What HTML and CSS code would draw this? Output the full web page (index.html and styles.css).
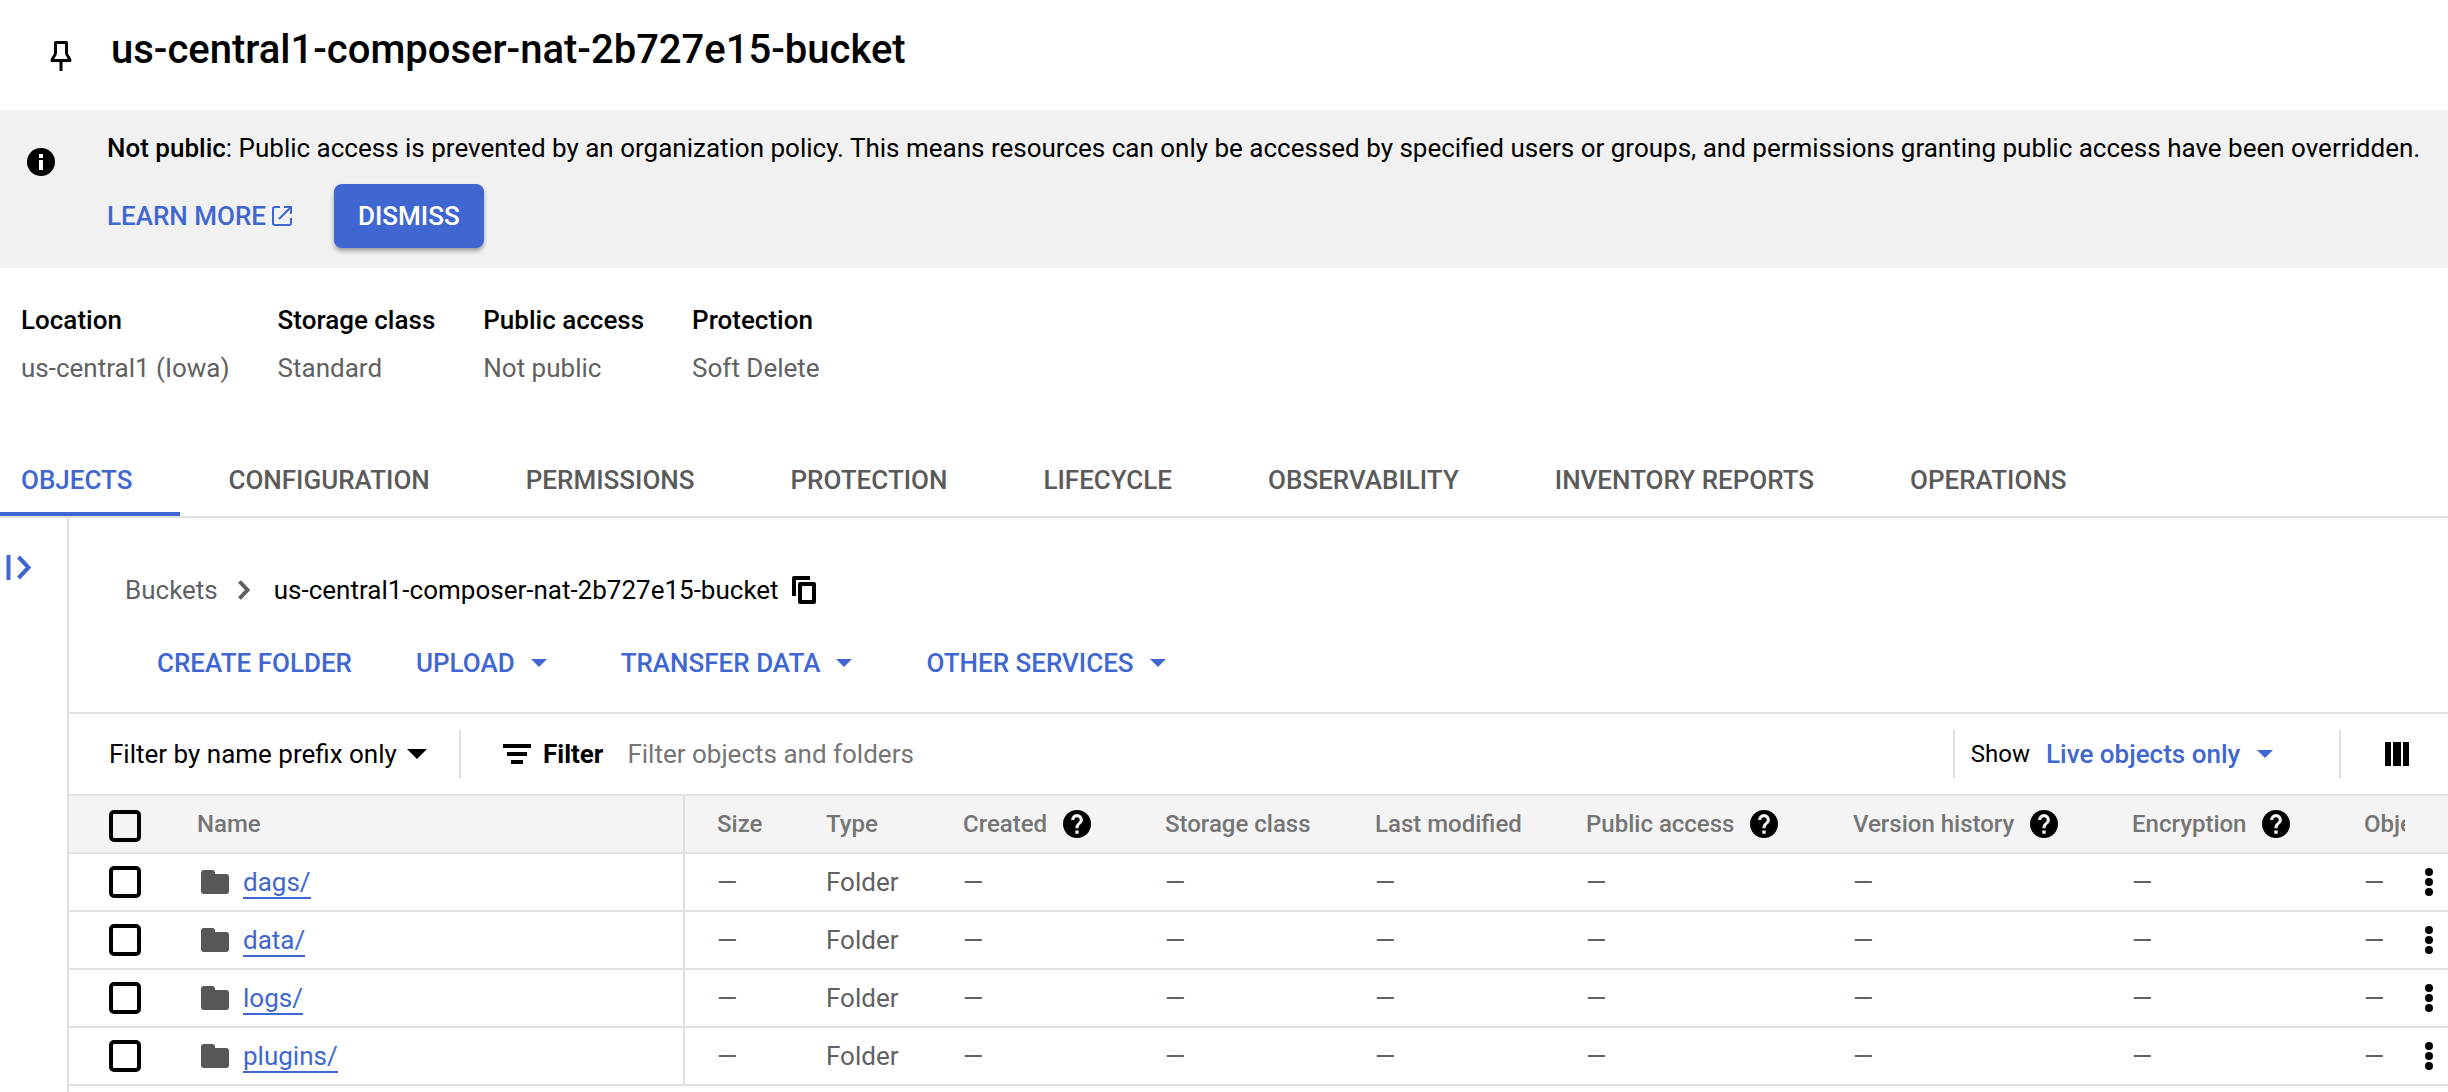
FILE: index.html
```html
<!DOCTYPE html>
<html lang="en">
<head>
<meta charset="utf-8">
<title>Bucket details</title>
<link rel="stylesheet" href="styles.css">
</head>
<body>
<svg class="sprite" aria-hidden="true">
  <symbol id="help" viewBox="2 2 20 20"><path d="M12 2a10 10 0 1 0 0 20 10 10 0 0 0 0-20zm1.2 17h-2.4v-2.4h2.4zm2-7.6-.9.9c-.8.8-1.2 1.400-1.200 2.800h-2.200v-.500c0-1.100.400-2.100 1.200-2.900l1.200-1.200c.4-.4.6-.9.6-1.400a1.900 1.900 0 0 0-3.800 0H7.800a4.200 4.200 0 0 1 8.400 0c0 .900-.400 1.700-1 2.300z"/></symbol>
  <symbol id="folder" viewBox="0 0 28 24"><path d="M3 0h8q3 0 3 3v1h11q3 0 3 3v14q0 3-3 3H3q-3 0-3-3V3q0-3 3-3z"/></symbol>
  <symbol id="more" viewBox="0 0 8 28"><circle cx="4" cy="4" r="4"/><circle cx="4" cy="14" r="4"/><circle cx="4" cy="24" r="4"/></symbol>
  <symbol id="caret" viewBox="0 0 16 8"><path d="M0 0h16l-8 8z"/></symbol>
</svg>

<header class="page-head">
  <button class="icon-button pin" aria-label="Pin page">
    <svg width="22" height="30" viewBox="0 0 22 30" fill="none" stroke="#000" stroke-width="3" stroke-linejoin="round"><path d="M5.500 1.500h11v10.500c0 3 3 4 3.500 7.500H2c.5-3.500 3.500-4.500 3.500-7.500z"/><path d="M11 20v10"/></svg>
  </button>
  <h1 class="title">us-central1-composer-nat-2b727e15-bucket</h1>
</header>

<section class="banner">
  <svg class="banner-icon" width="28" height="28" viewBox="0 0 28 28"><circle cx="14" cy="14" r="14"/><path fill="#fff" d="M12 6h4v4h-4zM12 12h4v10h-4z"/></svg>
  <div class="banner-body">
    <p class="banner-text"><strong>Not public</strong>: Public access is prevented by an organization policy. This means resources can only be accessed by specified users or groups, and permissions granting public access have been overridden.</p>
    <div class="banner-actions">
      <a class="learn" href="#">LEARN MORE<svg width="20" height="20" viewBox="0 0 20 20" fill="none" stroke="currentColor" stroke-width="2"><path d="M8 1H3Q1 1 1 3v14q0 2 2 2h14q2 0 2-2v-5M12 1h7v7M19 1 7 13"/></svg></a>
      <button class="dismiss">DISMISS</button>
    </div>
  </div>
</section>

<dl class="summary">
  <div class="fact"><dt>Location</dt><dd>us-central1 (Iowa)</dd></div>
  <div class="fact"><dt>Storage class</dt><dd>Standard</dd></div>
  <div class="fact"><dt>Public access</dt><dd>Not public</dd></div>
  <div class="fact"><dt>Protection</dt><dd>Soft Delete</dd></div>
</dl>

<nav class="tabs">
  <a class="tab active" href="#">OBJECTS</a>
  <a class="tab" href="#">CONFIGURATION</a>
  <a class="tab" href="#">PERMISSIONS</a>
  <a class="tab" href="#">PROTECTION</a>
  <a class="tab" href="#">LIFECYCLE</a>
  <a class="tab" href="#">OBSERVABILITY</a>
  <a class="tab" href="#">INVENTORY REPORTS</a>
  <a class="tab" href="#">OPERATIONS</a>
</nav>

<div class="workspace">
  <aside class="rail">
    <button class="icon-button" aria-label="Show folder browser">
      <svg width="26" height="26" viewBox="0 0 26 26" fill="none" stroke="#4067d1" stroke-width="4"><path d="M2.500 0v25M12.500 2l10 10.500-10 10.500"/></svg>
    </button>
  </aside>
  <main class="content">
    <div class="content-head">
      <div class="crumbs">
        <a class="crumb-root" href="#">Buckets</a>
        <svg width="12" height="20" viewBox="0 0 12 20" fill="none" stroke="#5f5f5f" stroke-width="4"><path d="m1.500 1.500 8 8.500-8 8.500"/></svg>
        <span class="crumb-here">us-central1-composer-nat-2b727e15-bucket</span>
        <button class="icon-button" aria-label="Copy bucket name">
          <svg width="24" height="28" viewBox="0 0 24 28" fill="none" stroke="#000" stroke-width="4" stroke-linejoin="round"><path d="M18 2H2v18"/><path d="M8 8h14v18H8z"/></svg>
        </button>
      </div>
      <div class="actions">
        <button class="action">CREATE FOLDER</button>
        <button class="action menu">UPLOAD<svg width="16" height="8"><use href="#caret"/></svg></button>
        <button class="action menu">TRANSFER DATA<svg width="16" height="8"><use href="#caret"/></svg></button>
        <button class="action menu">OTHER SERVICES<svg width="16" height="8"><use href="#caret"/></svg></button>
      </div>
    </div>

    <div class="toolbar">
      <div class="picker">
        <select aria-label="Filter mode"><option>Filter by name prefix only</option></select>
        <svg width="20" height="10" viewBox="0 0 20 10"><path d="M0 0h20L10 10z"/></svg>
      </div>
      <div class="filter">
        <svg width="28" height="20" viewBox="0 0 28 20"><path d="M0 0h28v4H0zM4 8h20v4H4zM8 16h12v4H8z"/></svg>
        <label for="filter">Filter</label>
        <input id="filter" type="text" placeholder="Filter objects and folders">
      </div>
      <div class="show">
        <label for="show">Show</label>
        <div class="picker live">
          <select id="show"><option>Live objects only</option></select>
          <svg width="16" height="8"><use href="#caret"/></svg>
        </div>
      </div>
      <div class="columns">
        <button class="icon-button" aria-label="Column options">
          <svg width="24" height="24" viewBox="0 0 24 24"><path d="M0 0h6v24H0zM8 0h8v24H8zM18 0h6v24h-6z"/></svg>
        </button>
      </div>
    </div>

    <table class="objects">
      <colgroup>
        <col class="c-check"><col class="c-name"><col class="c-size"><col class="c-type"><col class="c-created"><col class="c-storage"><col class="c-modified"><col class="c-public"><col class="c-version"><col class="c-encryption"><col class="c-retention"><col class="c-more">
      </colgroup>
      <thead>
        <tr>
          <th class="check"><input type="checkbox" aria-label="Select all"></th>
          <th class="name">Name</th>
          <th>Size</th>
          <th>Type</th>
          <th><span class="hinted">Created<svg width="28" height="28"><use href="#help"/></svg></span></th>
          <th>Storage class</th>
          <th>Last modified</th>
          <th><span class="hinted">Public access<svg width="28" height="28"><use href="#help"/></svg></span></th>
          <th><span class="hinted">Version history<svg width="28" height="28"><use href="#help"/></svg></span></th>
          <th><span class="hinted">Encryption<svg width="28" height="28"><use href="#help"/></svg></span></th>
          <th>Object</th>
          <th></th>
        </tr>
      </thead>
      <tbody>
        <tr>
          <td class="check"><input type="checkbox" aria-label="Select dags"></td>
          <td class="name"><span class="entry"><svg width="28" height="24"><use href="#folder"/></svg><a href="#">dags/</a></span></td>
          <td>—</td><td>Folder</td><td>—</td><td>—</td><td>—</td><td>—</td><td>—</td><td>—</td><td>—</td>
          <td class="more"><button class="icon-button" aria-label="Actions for dags"><svg width="8" height="28"><use href="#more"/></svg></button></td>
        </tr>
        <tr>
          <td class="check"><input type="checkbox" aria-label="Select data"></td>
          <td class="name"><span class="entry"><svg width="28" height="24"><use href="#folder"/></svg><a href="#">data/</a></span></td>
          <td>—</td><td>Folder</td><td>—</td><td>—</td><td>—</td><td>—</td><td>—</td><td>—</td><td>—</td>
          <td class="more"><button class="icon-button" aria-label="Actions for data"><svg width="8" height="28"><use href="#more"/></svg></button></td>
        </tr>
        <tr>
          <td class="check"><input type="checkbox" aria-label="Select logs"></td>
          <td class="name"><span class="entry"><svg width="28" height="24"><use href="#folder"/></svg><a href="#">logs/</a></span></td>
          <td>—</td><td>Folder</td><td>—</td><td>—</td><td>—</td><td>—</td><td>—</td><td>—</td><td>—</td>
          <td class="more"><button class="icon-button" aria-label="Actions for logs"><svg width="8" height="28"><use href="#more"/></svg></button></td>
        </tr>
        <tr>
          <td class="check"><input type="checkbox" aria-label="Select plugins"></td>
          <td class="name"><span class="entry"><svg width="28" height="24"><use href="#folder"/></svg><a href="#">plugins/</a></span></td>
          <td>—</td><td>Folder</td><td>—</td><td>—</td><td>—</td><td>—</td><td>—</td><td>—</td><td>—</td>
          <td class="more"><button class="icon-button" aria-label="Actions for plugins"><svg width="8" height="28"><use href="#more"/></svg></button></td>
        </tr>
      </tbody>
    </table>
  </main>
</div>
</body>
</html>
```
FILE: styles.css
```css
:root {
  --blue: #4067d1;
  --grey: #616161;
  --head-grey: #757575;
  --line: #e0e0e0;
}

* {
  box-sizing: border-box;
}

body {
  margin: 0;
  min-height: 100vh;
  display: flex;
  flex-direction: column;
  background: #fff;
  color: #000;
  font-family: Roboto, sans-serif;
  font-size: 26px;
  line-height: 32px;
}

button,
input,
select {
  font: inherit;
  color: inherit;
}

button {
  padding: 0;
  border: 0;
  background: none;
}

svg {
  display: block;
  flex: none;
}

.sprite {
  display: none;
}

.icon-button {
  display: block;
  flex: none;
}

/* Page heading */
.page-head {
  display: flex;
  gap: 39px;
  padding: 26px 50px 36px;
}

.pin {
  align-self: flex-start;
  margin-top: 15px;
}

.title {
  margin: 0;
  font-size: 40px;
  font-weight: 500;
  line-height: 48px;
}

/* Notice */
.banner {
  display: flex;
  gap: 52px;
  padding: 22px 27px 20px;
  background: #f1f1f1;
}

.banner-icon {
  margin-top: 16px;
}

.banner-text {
  margin: 0 0 20px;
}

.banner-text strong {
  font-weight: 500;
}

.banner-actions {
  display: flex;
  align-items: center;
  gap: 42px;
}

.learn {
  display: flex;
  align-items: center;
  gap: 6px;
  color: var(--blue);
  font-weight: 500;
  text-decoration: none;
}

.dismiss {
  height: 64px;
  padding: 0 24px;
  border-radius: 8px;
  background: var(--blue);
  color: #fff;
  font-weight: 500;
  box-shadow: 0 3px 4px rgba(0, 0, 0, 0.35);
}

/* Bucket facts */
.summary {
  display: flex;
  gap: 48px;
  margin: 0;
  padding: 36px 21px 44px;
}

.fact {
  display: flex;
  flex-direction: column;
  gap: 16px;
}

.fact dt {
  font-weight: 500;
}

.fact dd {
  margin: 0;
  color: var(--grey);
}

/* Tabs */
.tabs {
  display: flex;
  border-bottom: 2px solid var(--line);
}

.tab {
  padding: 36px 48px 16px;
  border-bottom: 4px solid transparent;
  color: #5a5a5a;
  font-weight: 500;
  text-decoration: none;
  white-space: nowrap;
}

.tab.active {
  padding-left: 21px;
  border-color: var(--blue);
  color: var(--blue);
}

/* Workspace */
.workspace {
  display: flex;
  flex: 1;
}

.rail {
  flex: none;
  width: 69px;
  padding: 37px 6px;
  border-right: 2px solid var(--line);
}

.content {
  flex: 1;
  min-width: 0;
  overflow: hidden;
}

.content-head {
  padding: 56px 56px 33px;
  border-bottom: 2px solid var(--line);
}

.crumbs {
  display: flex;
  align-items: center;
  height: 32px;
}

.crumb-root {
  margin-right: 20px;
  color: var(--grey);
  text-decoration: none;
}

.crumb-here {
  margin: 0 13px 0 24px;
}

.actions {
  display: flex;
  gap: 74px;
  margin-top: 41px;
  padding-left: 32px;
}

.action {
  display: flex;
  align-items: center;
  gap: 16px;
  color: var(--blue);
  fill: var(--blue);
  font-weight: 500;
}

.action:first-child {
  margin-right: -10px;
}

/* Filter bar */
.toolbar {
  display: flex;
  align-items: center;
  height: 82px;
  padding-left: 40px;
  border-bottom: 2px solid var(--line);
}

.picker {
  display: grid;
  align-items: center;
}

.picker > * {
  grid-area: 1 / 1;
}

.picker svg {
  justify-self: end;
  pointer-events: none;
}

.picker select {
  appearance: none;
  padding: 0 30px 0 0;
  border: 0;
  background: none;
}

.filter {
  display: flex;
  flex: 1;
  align-items: center;
  height: 48px;
  margin-left: 32px;
  padding-left: 42px;
  border-left: 2px solid var(--line);
}

.filter label {
  margin: 0 24px 0 12px;
  font-weight: 700;
}

.filter input {
  flex: 1;
  min-width: 0;
  padding: 0;
  border: 0;
  background: none;
}

.filter input::placeholder {
  color: #757575;
}

.show {
  display: flex;
  align-items: center;
  gap: 16px;
  height: 48px;
  padding: 0 66px 0 16px;
  border-left: 2px solid var(--line);
}

.show label {
  font-size: 24px;
}

.live {
  color: var(--blue);
  fill: var(--blue);
  font-weight: 500;
}

.live select {
  padding-right: 32px;
}

.columns {
  display: flex;
  align-items: center;
  height: 48px;
  padding: 0 39px 0 44px;
  border-left: 2px solid var(--line);
}

/* Object list */
.objects {
  width: 100%;
  border-collapse: separate;
  border-spacing: 0;
  table-layout: fixed;
}

.c-check { width: 96px; }
.c-size { width: 109px; }
.c-type { width: 137px; }
.c-created { width: 202px; }
.c-storage { width: 210px; }
.c-modified { width: 211px; }
.c-public { width: 267px; }
.c-version { width: 279px; }
.c-encryption { width: 232px; }
.c-retention { width: 73px; }
.c-more { width: 43px; }

.objects th,
.objects td {
  height: 58px;
  padding: 0 0 0 32px;
  border-bottom: 2px solid var(--line);
  overflow: hidden;
  text-align: left;
  white-space: nowrap;
  color: var(--grey);
}

.objects th {
  background: #f4f4f4;
  color: var(--head-grey);
  font-size: 24px;
  font-weight: 500;
}

.objects .check {
  padding-left: 40px;
}

.objects th.check {
  padding-top: 4px;
}

.objects .name {
  border-right: 2px solid var(--line);
}

.objects td.name {
  padding-left: 36px;
}

.objects .more {
  padding-left: 20px;
}

.check input {
  display: block;
  appearance: none;
  width: 32px;
  height: 32px;
  margin: 0;
  border: 4px solid #000;
  border-radius: 5px;
}

.hinted {
  display: flex;
  align-items: center;
  gap: 16px;
  fill: #000;
}

.entry {
  display: flex;
  align-items: center;
  gap: 14px;
  fill: #575757;
}

.entry a {
  height: 33px;
  border-bottom: 2px solid var(--blue);
  color: var(--blue);
  text-decoration: none;
}
```
